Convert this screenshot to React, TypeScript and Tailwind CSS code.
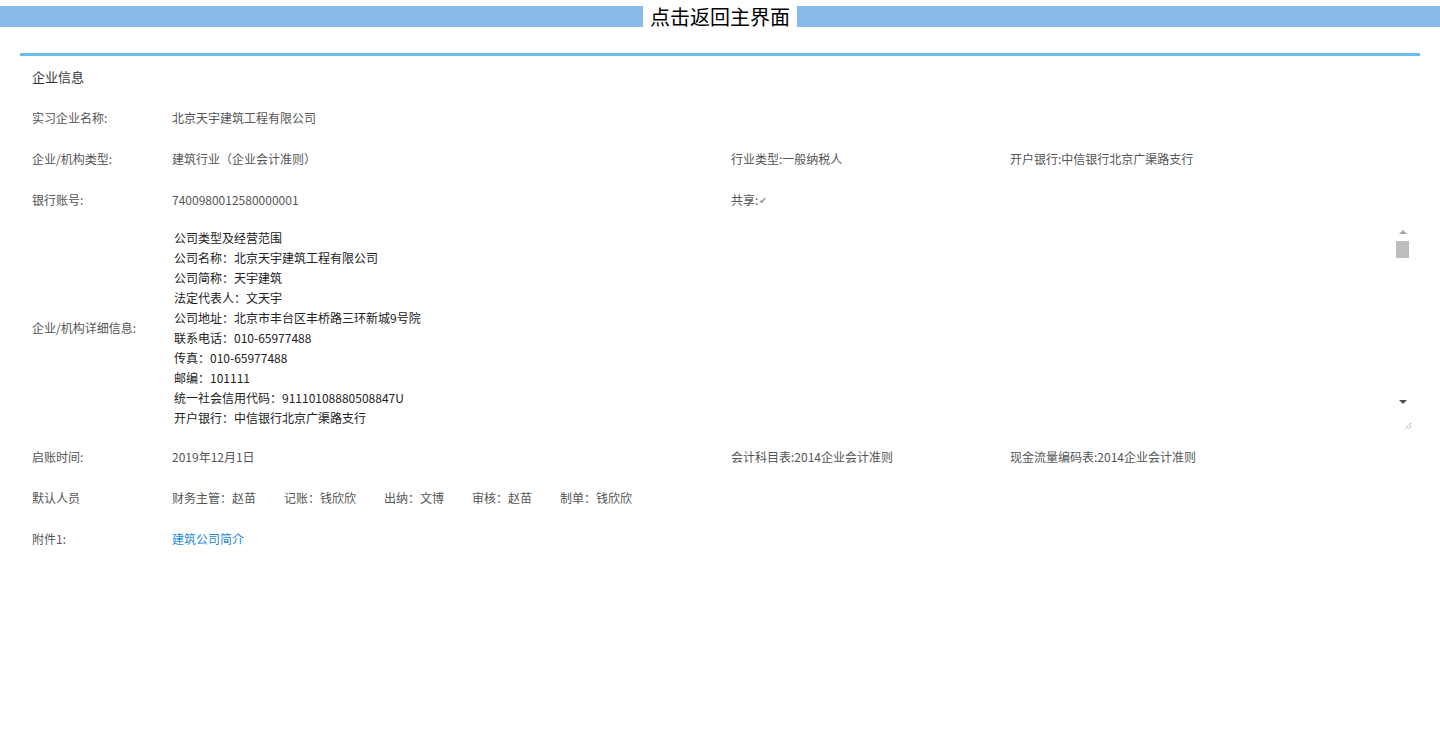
import React from "react";

const detalle = [
  "公司类型及经营范围",
  "公司名称：北京天宇建筑工程有限公司",
  "公司简称：天宇建筑",
  "法定代表人：文天宇",
  "公司地址：北京市丰台区丰桥路三环新城9号院",
  "联系电话：010-65977488",
  "传真：010-65977488",
  "邮编：101111",
  "统一社会信用代码：91110108880508847U",
  "开户银行：中信银行北京广渠路支行",
];

const personas = [
  "财务主管：赵苗",
  "记账：钱欣欣",
  "出纳：文博",
  "审核：赵苗",
  "制单：钱欣欣",
];

function Fila({ children, className = "" }: { children: React.ReactNode; className?: string }) {
  return <div className={`flex items-center h-[41px] ${className}`}>{children}</div>;
}

export default function App() {
  return (
    <div
      className="min-h-screen bg-white pt-[6px] text-[12px] text-[#555]"
      style={{ fontFamily: '"Noto Sans CJK SC", "Noto Sans", sans-serif' }}
    >
      {/* barra superior */}
      <div className="h-[21px] bg-[#88bbea] flex justify-center">
        <a href="#" className="bg-white px-[7px] h-[21px] text-[20px] leading-[21px] text-black">
          点击返回主界面
        </a>
      </div>

      <div className="mx-[20px] mt-[26px] border-t-[3px] border-[#6cbfea] px-[12px]">
        <div className="h-[41px] flex items-center text-[13px] text-[#333]">企业信息</div>

        <Fila>
          <div className="w-[140px]">实习企业名称:</div>
          <div>北京天宇建筑工程有限公司</div>
        </Fila>

        <Fila>
          <div className="w-[140px]">企业/机构类型:</div>
          <div className="w-[559px]">建筑行业（企业会计准则）</div>
          <div className="w-[279px]">行业类型:一般纳税人</div>
          <div>开户银行:中信银行北京广渠路支行</div>
        </Fila>

        <Fila>
          <div className="w-[140px]">银行账号:</div>
          <div className="w-[559px]">7400980012580000001</div>
          <div className="flex items-center">
            共享:<span className="text-[10px] text-[#999] ml-[1px]">✔</span>
          </div>
        </Fila>

        <div className="flex items-center h-[216px]">
          <div className="w-[140px]">企业/机构详细信息:</div>
          <div className="relative flex-1 mr-[-4px] h-[206px] overflow-hidden pl-[2px] pt-[3px]">
            <div className="text-[12px] leading-[20px] text-[#222]">
              {detalle.map((l) => (
                <div key={l}>{l}</div>
              ))}
            </div>
            {/* barra de desplazamiento */}
            <div className="absolute right-[3px] top-0 bottom-0 w-[13px] bg-white">
              <div className="absolute left-[3px] top-[5px] w-0 h-0 border-l-[4px] border-r-[4px] border-b-[4px] border-l-transparent border-r-transparent border-b-[#a3a3a3]" />
              <div className="absolute left-0 top-[16px] w-[13px] h-[17px] bg-[#bdbdbd]" />
              <div className="absolute left-[3px] top-[175px] w-0 h-0 border-l-[4px] border-r-[4px] border-t-[4px] border-l-transparent border-r-transparent border-t-[#505050]" />
            </div>
            <svg className="absolute right-0 bottom-[1px]" width="10" height="10" viewBox="0 0 10 10">
              <path d="M9 3 L3 9 M9 6 L6 9" stroke="#777" strokeWidth="1" strokeDasharray="1 1" />
            </svg>
          </div>
        </div>

        <Fila>
          <div className="w-[140px]">启账时间:</div>
          <div className="w-[559px]">2019年12月1日</div>
          <div className="w-[279px]">会计科目表:2014企业会计准则</div>
          <div>现金流量编码表:2014企业会计准则</div>
        </Fila>

        <Fila>
          <div className="w-[140px]">默认人员</div>
          <div className="flex gap-[28px]">
            {personas.map((p) => (
              <span key={p}>{p}</span>
            ))}
          </div>
        </Fila>

        <Fila>
          <div className="w-[140px]">附件1:</div>
          <a href="#" className="text-[#1d8ad6]">建筑公司简介</a>
        </Fila>
      </div>
    </div>
  );
}
